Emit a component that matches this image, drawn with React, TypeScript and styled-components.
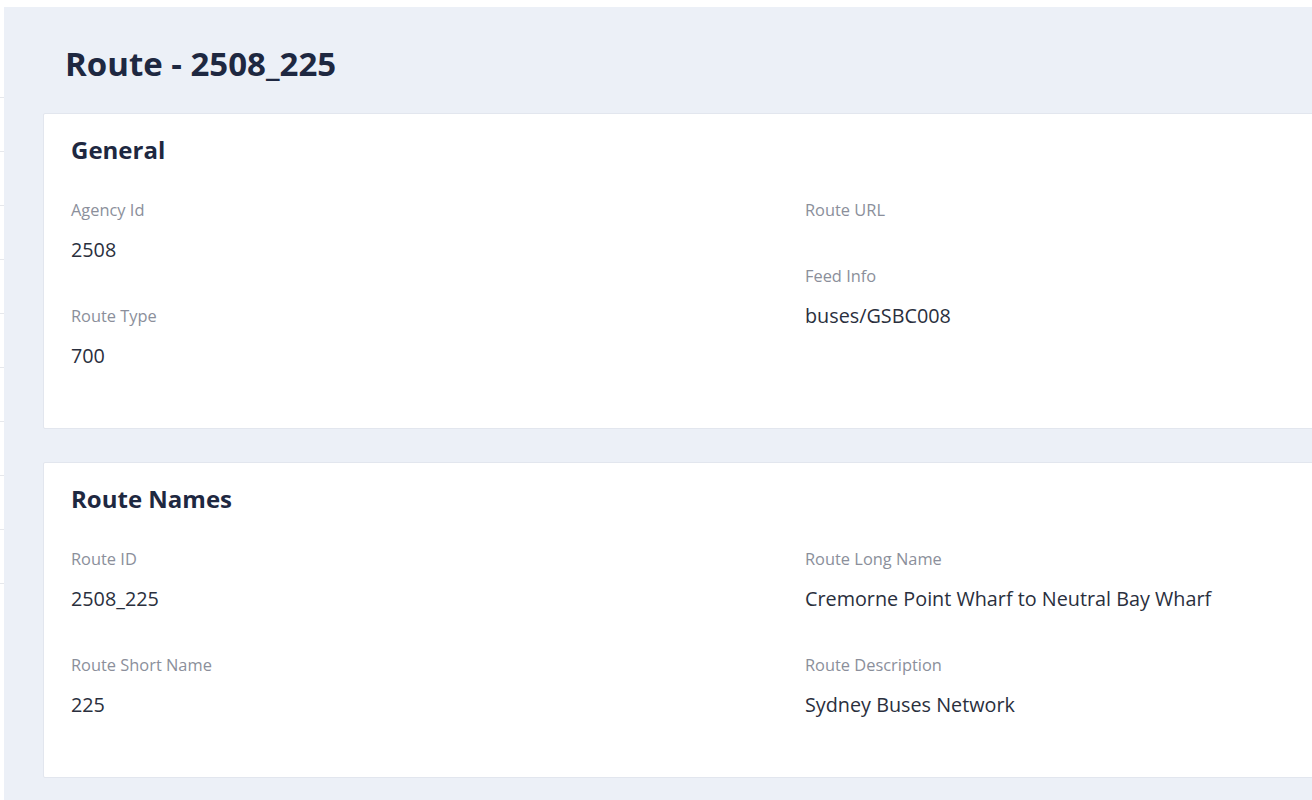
import React from "react";
import styled, { createGlobalStyle } from "styled-components";

const Global = createGlobalStyle`
  html, body {
    margin: 0;
    padding: 0;
    overflow: hidden;
    background: #ffffff;
    font-family: "Open Sans", "Noto Sans", sans-serif;
  }
  * { box-sizing: border-box; }
`;

const Page = styled.div`
  display: flex;
  flex-direction: column;
  width: 1312px;
  height: 800px;
  overflow: hidden;
`;

const TopStrip = styled.div`
  height: 7px;
  flex: none;
  background: #ffffff;
`;

const Body = styled.div`
  display: flex;
  flex: 1;
  min-height: 0;
`;

const Sidebar = styled.nav`
  width: 4px;
  flex: none;
  background: #ffffff;
  padding-top: 37px;
  display: flex;
  flex-direction: column;
`;

const SideItem = styled.div`
  height: 54px;
  border-bottom: 1px solid #e6e8ec;
`;

const Main = styled.main`
  flex: none;
  width: 1600px;
  background: #ecf0f7;
  padding: 33px 0 0 39px;
  display: flex;
  flex-direction: column;
  gap: 33px;
`;

const PageTitle = styled.h1`
  margin: 0 0 -8px 22px;
  font-size: 33px;
  line-height: 48px;
  font-weight: 700;
  color: #1e2841;
`;

const Card = styled.section`
  width: 1528px;
  background: #ffffff;
  border: 1px solid #e2e6ee;
  border-radius: 2px;
  padding: 20px 27px 18px;
`;

const CardTitle = styled.h2`
  margin: 0 0 32px;
  font-size: 24px;
  line-height: 32px;
  font-weight: 700;
  color: #1e2841;
`;

const Grid = styled.div`
  display: grid;
  grid-template-columns: 734px 734px;
`;

const Column = styled.div`
  display: flex;
  flex-direction: column;
`;

const Field = styled.div`
  display: flex;
  flex-direction: column;
  margin-bottom: 34px;
`;

const Label = styled.div`
  font-size: 16.4px;
  line-height: 24px;
  color: #8b8f9b;
  margin-bottom: 8px;
`;

const Value = styled.div<{ $empty?: boolean }>`
  font-size: 19.8px;
  line-height: 40px;
  color: #2a2f3d;
  height: ${(p) => (p.$empty ? "0" : "40px")};
`;

type F = { label: string; value: string };

const FieldView = ({ label, value }: F) => (
  <Field>
    <Label>{label}</Label>
    <Value $empty={value === ""}>{value}</Value>
  </Field>
);

const InfoCard = ({ title, left, right }: { title: string; left: F[]; right: F[] }) => (
  <Card>
    <CardTitle>{title}</CardTitle>
    <Grid>
      <Column>
        {left.map((f) => (
          <FieldView key={f.label} {...f} />
        ))}
      </Column>
      <Column>
        {right.map((f) => (
          <FieldView key={f.label} {...f} />
        ))}
      </Column>
    </Grid>
  </Card>
);

export default function App() {
  return (
    <>
      <Global />
      <Page>
        <TopStrip />
        <Body>
          <Sidebar>
            {Array.from({ length: 10 }).map((_, i) => (
              <SideItem key={i} />
            ))}
          </Sidebar>
          <Main>
            <PageTitle>Route - 2508_225</PageTitle>
            <InfoCard
              title="General"
              left={[
                { label: "Agency Id", value: "2508" },
                { label: "Route Type", value: "700" },
              ]}
              right={[
                { label: "Route URL", value: "" },
                { label: "Feed Info", value: "buses/GSBC008" },
              ]}
            />
            <InfoCard
              title="Route Names"
              left={[
                { label: "Route ID", value: "2508_225" },
                { label: "Route Short Name", value: "225" },
              ]}
              right={[
                { label: "Route Long Name", value: "Cremorne Point Wharf to Neutral Bay Wharf" },
                { label: "Route Description", value: "Sydney Buses Network" },
              ]}
            />
          </Main>
        </Body>
      </Page>
    </>
  );
}
